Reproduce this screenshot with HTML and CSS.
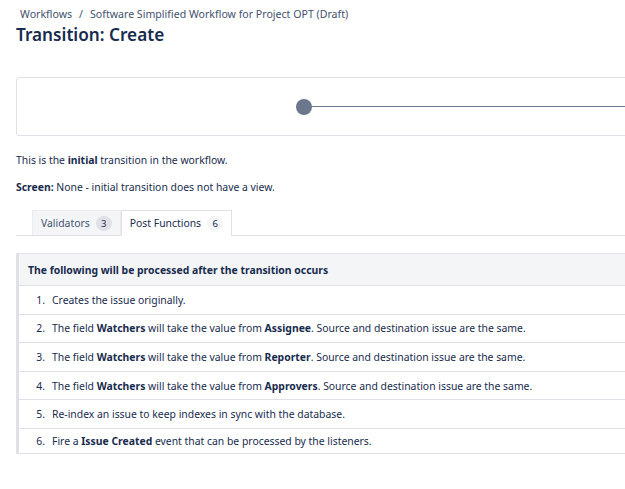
FILE: index.html
```html
<!DOCTYPE html>
<html>
<head>
<meta charset="utf-8">
<link rel="stylesheet" href="styles.css">
</head>
<body>
<div class="page">
  <div class="breadcrumb"><span>Workflows</span><span class="sep">/</span><span>Software Simplified Workflow for Project OPT (Draft)</span></div>
  <h1 class="title">Transition: Create</h1>
  <div class="diagram">
    <div class="node"></div>
    <div class="edge"></div>
  </div>
  <p class="info first">This is the <b>initial</b> transition in the workflow.</p>
  <p class="info"><b>Screen:</b> None - initial transition does not have a view.</p>
  <div class="tabs">
    <div class="tab">Validators <span class="badge">3</span></div>
    <div class="tab active">Post Functions <span class="badge">6</span></div>
  </div>
  <div class="panel">
    <div class="panel-head">The following will be processed after the transition occurs</div>
    <ol class="steps">
      <li class="step"><span class="num">1.</span><span>Creates the issue originally.</span></li>
      <li class="step"><span class="num">2.</span><span>The field <b>Watchers</b> will take the value from <b>Assignee</b>. Source and destination issue are the same.</span></li>
      <li class="step"><span class="num">3.</span><span>The field <b>Watchers</b> will take the value from <b>Reporter</b>. Source and destination issue are the same.</span></li>
      <li class="step"><span class="num">4.</span><span>The field <b>Watchers</b> will take the value from <b>Approvers</b>. Source and destination issue are the same.</span></li>
      <li class="step"><span class="num">5.</span><span>Re-index an issue to keep indexes in sync with the database.</span></li>
      <li class="step"><span class="num">6.</span><span>Fire a <b>Issue Created</b> event that can be processed by the listeners.</span></li>
    </ol>
  </div>
</div>
</body>
</html>
```
FILE: styles.css
```css
html, body {
  margin: 0;
  padding: 0;
  background: #ffffff;
  overflow: hidden;
}
body {
  font-family: "Noto Sans", "Open Sans", sans-serif;
  font-size: 10.4px;
  color: #172b4d;
}
.page {
  width: 760px;
  padding: 0 0 0 16px;
}
.breadcrumb {
  padding: 7px 0 0 4px;
  line-height: 14px;
  color: #42526e;
  font-size: 10.6px;
}
.breadcrumb .sep {
  margin: 0 7px;
}
.title {
  margin: 2px 0 0;
  font-size: 17.2px;
  line-height: 24px;
  font-weight: 600;
  color: #172b4d;
}
.diagram {
  margin-top: 30px;
  height: 57px;
  border: 1px solid #dfe1e6;
  border-radius: 3px;
  display: flex;
  align-items: center;
  padding-left: 279px;
}
.node {
  width: 16px;
  height: 16px;
  border-radius: 50%;
  background: #6b778c;
  flex: none;
}
.edge {
  flex: 1;
  height: 1px;
  background: #6b778c;
}
.info {
  margin: 11px 0 0;
  line-height: 16px;
  color: #172b4d;
}
.info.first {
  margin-top: 16px;
}
.tabs {
  margin-top: 15px;
  padding-left: 16px;
  display: flex;
  align-items: flex-start;
  border-bottom: 1px solid #dfe1e6;
  height: 25px;
}
.tab {
  display: flex;
  align-items: center;
  gap: 6px;
  padding: 0 8px;
  background: #f4f5f7;
  border: 1px solid #ebecf0;
  border-bottom: none;
  color: #42526e;
  box-sizing: border-box;
  height: 25px;
}
.tab.active {
  background: #ffffff;
  border-color: #dfe1e6;
  height: 26px;
  padding-bottom: 1px;
  color: #172b4d;
}
.badge {
  display: inline-flex;
  align-items: center;
  justify-content: center;
  min-width: 16px;
  height: 15px;
  border-radius: 8px;
  background: #dfe1e6;
  font-size: 9.5px;
  color: #172b4d;
}
.tab.active .badge {
  background: #f4f5f7;
}
.panel {
  margin-top: 17px;
  border: 1px solid #dfe1e6;
  border-left: 3px solid #dfe1e6;
}
.panel-head {
  background: #f4f5f7;
  height: 31px;
  display: flex;
  align-items: center;
  padding-left: 9px;
  font-weight: 700;
  border-bottom: 1px solid #dfe1e6;
}
.steps {
  list-style: none;
  margin: 0;
  padding: 0;
}
.step {
  display: flex;
  align-items: center;
  height: 27.6px;
  border-bottom: 1px solid #dfe1e6;
}
.step:last-child {
  border-bottom: none;
  height: 24px;
}
.num {
  width: 26px;
  text-align: right;
  flex: none;
}
.num + span {
  margin-left: 7px;
}
```
